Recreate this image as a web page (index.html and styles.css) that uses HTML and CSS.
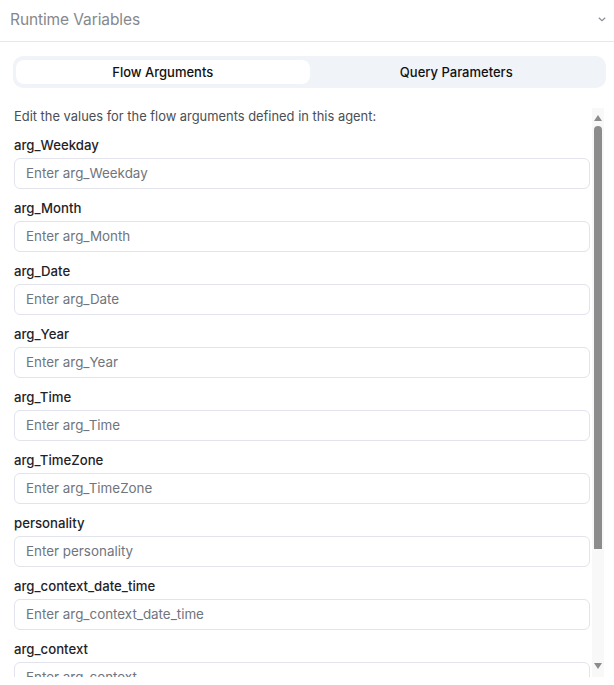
FILE: index.html
```html
<!DOCTYPE html>
<html>
<head>
<meta charset="utf-8">
<link rel="stylesheet" href="styles.css">
</head>
<body>
<div class="panel">
  <div class="header">
    <span class="title">Runtime Variables</span>
    <svg class="chev" width="8" height="5" viewBox="0 0 8 5"><path d="M0.8 0.8l3.2 3 3.2-3" fill="none" stroke="#8a8f98" stroke-width="1.2"/></svg>
  </div>
  <div class="tabs">
    <div class="tab active">Flow Arguments</div>
    <div class="tab">Query Parameters</div>
  </div>
  <div class="body">
    <div class="scroll">
      <p class="desc">Edit the values for the flow arguments defined in this agent:</p>
      <div class="field"><label>arg_Weekday</label><input placeholder="Enter arg_Weekday"></div>
      <div class="field"><label>arg_Month</label><input placeholder="Enter arg_Month"></div>
      <div class="field"><label>arg_Date</label><input placeholder="Enter arg_Date"></div>
      <div class="field"><label>arg_Year</label><input placeholder="Enter arg_Year"></div>
      <div class="field"><label>arg_Time</label><input placeholder="Enter arg_Time"></div>
      <div class="field"><label>arg_TimeZone</label><input placeholder="Enter arg_TimeZone"></div>
      <div class="field"><label>personality</label><input placeholder="Enter personality"></div>
      <div class="field"><label>arg_context_date_time</label><input placeholder="Enter arg_context_date_time"></div>
      <div class="field"><label>arg_context</label><input placeholder="Enter arg_context"></div>
      <div class="field"><label>arg_user_name</label><input placeholder="Enter arg_user_name"></div>
    </div>
    <div class="scrollbar">
      <span class="arrow up"></span>
      <span class="thumb"></span>
      <span class="arrow down"></span>
    </div>
  </div>
</div>
</body>
</html>
```
FILE: styles.css
```css
* { box-sizing: border-box; }
html, body { margin: 0; padding: 0; background: #fff; }
body { font-family: Inter, "Noto Sans", sans-serif; color: #1f2328; }
.panel { width: 614px; height: 685px; overflow: hidden; }
.header {
  height: 42px;
  border-bottom: 1px solid #e5e7eb;
  display: flex;
  align-items: center;
  justify-content: space-between;
  padding: 0 8px 2px 10px;
}
.title { font-size: 15.5px; color: #85888e; letter-spacing: -0.1px; }
.chev { display: block; }
.tabs {
  margin: 14px 8px 0 13px;
  height: 32px;
  background: #f0f3f7;
  border-radius: 10px;
  padding: 4px 3px;
  display: flex;
}
.tab {
  flex: 1;
  display: flex;
  align-items: center;
  justify-content: center;
  font-size: 13px;
  font-weight: 500;
  color: #111;
  border-radius: 8px;
}
.tab.active { background: #fff; }
.body {
  display: flex;
  margin: 20px 10px 0 14px;
  height: 569px;
}
.scroll {
  flex: 1;
  overflow: hidden;
}
.scrollbar {
  width: 12px;
  margin-left: 2px;
  background: #f8f8f8;
  display: flex;
  flex-direction: column;
  align-items: center;
  padding: 6px 0 8px;
}
.arrow {
  width: 0;
  height: 0;
  border-left: 4px solid transparent;
  border-right: 4px solid transparent;
}
.arrow.up { border-bottom: 6px solid #8c8c8c; margin-top: 1px; }
.arrow.down { border-top: 6px solid #8c8c8c; margin-top: auto; }
.thumb {
  width: 8px;
  height: 423px;
  margin-top: 5px;
  background: #8c8c8c;
  border-radius: 4px 4px 0 0;
}
.desc {
  margin: 0;
  font-size: 12.9px;
  line-height: 18px;
  color: #4b4f55;
}
.field { margin-top: 10px; }
.field label {
  display: block;
  font-size: 13.2px;
  font-weight: 500;
  line-height: 18px;
  color: #1f2328;
  margin-bottom: 4px;
}
.field input {
  display: block;
  width: 100%;
  height: 31px;
  border: 1px solid #e2e3ec;
  border-radius: 6px;
  padding: 0 11px 1px;
  font-family: inherit;
  font-size: 13.4px;
  color: #1f2328;
  outline: none;
}
.field input::placeholder { color: #70757d; }
```
